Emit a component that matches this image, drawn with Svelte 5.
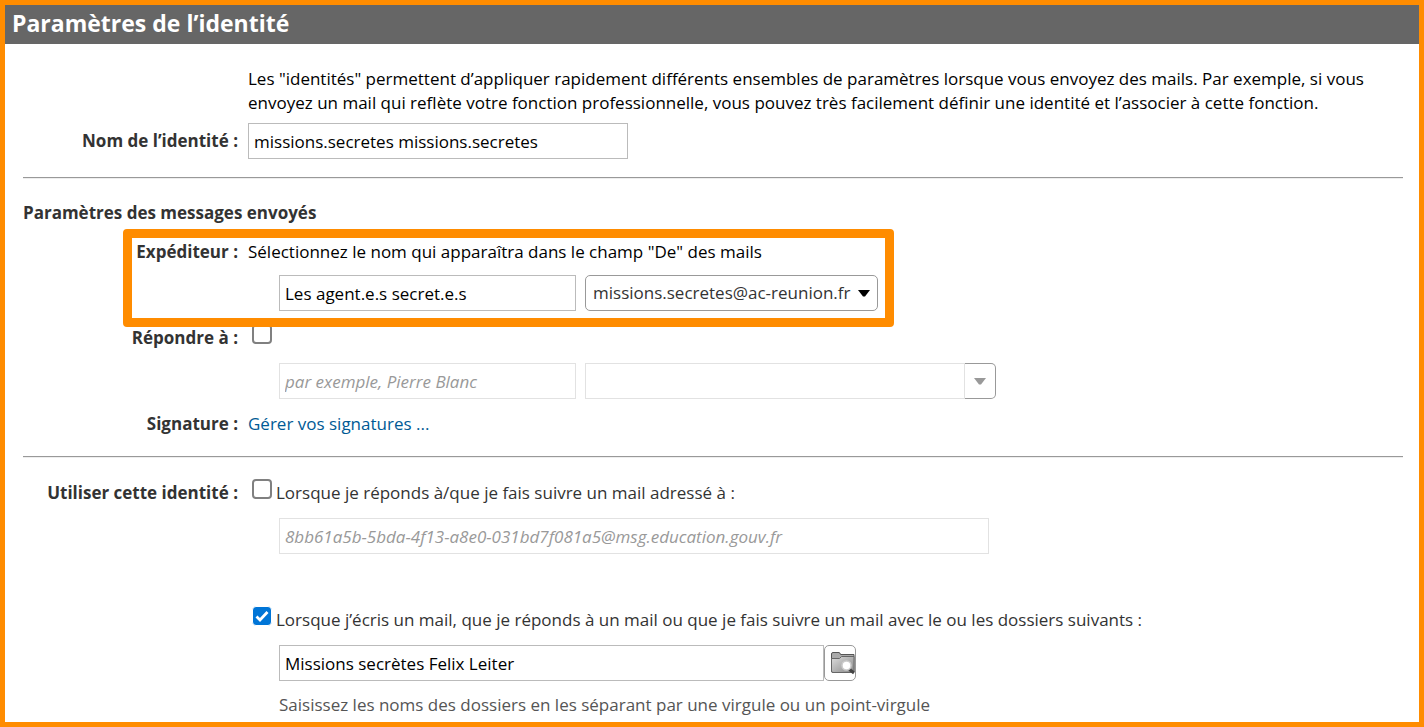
<script lang="ts">
	let identityName = $state('missions.secretes missions.secretes');
	let senderName = $state('Les agent.e.s secret.e.s');
	let senderAddress = $state('missions.secretes@ac-reunion.fr');
	let replyTo = $state(false);
	let replyName = $state('');
	let replyAddress = $state('');
	let useForAddress = $state(false);
	let addresses = $state('');
	let useForFolders = $state(true);
	let folders = $state('Missions secrètes Felix Leiter');

	const senderAddresses = ['missions.secretes@ac-reunion.fr'];
</script>

{#snippet checkbox(id: string, checked: boolean, toggle: () => void)}
	<span class="check">
		<input type="checkbox" {id} {checked} onchange={toggle} />
		<svg viewBox="0 0 20 20" aria-hidden="true">
			<path d="M4.5 10.5l3.5 3.500L15.500 6" fill="none" stroke="#fff" stroke-width="2.800" />
		</svg>
	</span>
{/snippet}

<main class="panel">
	<h1>Paramètres de l’identité</h1>

	<form class="body">
		<section class="identity">
			<div class="row">
				<span></span>
				<p>
					Les "identités" permettent d’appliquer rapidement différents ensembles de paramètres lorsque
					vous envoyez des mails. Par exemple, si vous envoyez un mail qui reflète votre fonction
					professionnelle, vous pouvez très facilement définir une identité et l’associer à cette
					fonction.
				</p>
			</div>
			<div class="row middle">
				<label class="name" for="identity-name">Nom de l’identité :</label>
				<input class="field medium" id="identity-name" type="text" bind:value={identityName} />
			</div>
		</section>

		<hr />

		<section class="sent">
			<h2>Paramètres des messages envoyés</h2>

			<div class="row sender">
				<label class="name" for="sender-name">Expéditeur :</label>
				<div>
					<p>Sélectionnez le nom qui apparaîtra dans le champ "De" des mails</p>
					<div class="controls">
						<input class="field short" id="sender-name" type="text" bind:value={senderName} />
						<span class="select">
							<select aria-label="Adresse" bind:value={senderAddress}>
								{#each senderAddresses as address (address)}
									<option value={address}>{address}</option>
								{/each}
							</select>
							<svg width="12" height="7" viewBox="0 0 12 7" aria-hidden="true">
								<path d="M0 0h12L7 6.5H5z" fill="#000" />
							</svg>
						</span>
					</div>
				</div>
				<span class="highlight"></span>
			</div>

			<div class="row reply">
				<label class="name" for="reply-to">Répondre à :</label>
				<div>
					<div class="option">
						{@render checkbox('reply-to', replyTo, () => (replyTo = !replyTo))}
					</div>
					<div class="controls">
						<input
							class="field short"
							type="text"
							aria-label="Nom de réponse"
							placeholder="par exemple, Pierre Blanc"
							disabled={!replyTo}
							bind:value={replyName}
						/>
						<span class="combo">
							<input
								class="field medium"
								type="text"
								aria-label="Adresse de réponse"
								disabled={!replyTo}
								bind:value={replyAddress}
							/>
							<button type="button" aria-label="Choisir une adresse" disabled={!replyTo}>
								<svg width="12" height="7" viewBox="0 0 12 7" aria-hidden="true">
									<path d="M0 0h12L7 6.5H5z" fill="#999" />
								</svg>
							</button>
						</span>
					</div>
				</div>
			</div>

			<div class="row signature">
				<span class="name">Signature :</span>
				<p><a href="#signatures">Gérer vos signatures ...</a></p>
			</div>
		</section>

		<hr />

		<section class="usage">
			<div class="row">
				<span class="name">Utiliser cette identité :</span>
				<div>
					<div class="option">
						{@render checkbox('use-address', useForAddress, () => (useForAddress = !useForAddress))}
						<label for="use-address">Lorsque je réponds à/que je fais suivre un mail adressé à :</label>
					</div>
					<div class="controls">
						<input
							class="field long"
							type="text"
							aria-label="Adresses"
							placeholder="8bb61a5b-5bda-4f13-a8e0-031bd7f081a5@msg.education.gouv.fr"
							disabled={!useForAddress}
							bind:value={addresses}
						/>
					</div>

					<div class="option folders">
						{@render checkbox('use-folders', useForFolders, () => (useForFolders = !useForFolders))}
						<label for="use-folders">
							Lorsque j’écris un mail, que je réponds à un mail ou que je fais suivre un mail avec le ou
							les dossiers suivants :
						</label>
					</div>
					<div class="controls joined">
						<input
							class="field folder"
							type="text"
							aria-label="Dossiers"
							disabled={!useForFolders}
							bind:value={folders}
						/>
						<button class="browse" type="button" aria-label="Parcourir les dossiers">
							<svg width="25" height="24" viewBox="0 0 25 24" aria-hidden="true">
								<defs>
									<linearGradient id="folder" x1="0" y1="0" x2="1" y2="1">
										<stop offset="0" stop-color="#ddd" />
										<stop offset="1" stop-color="#888" />
									</linearGradient>
								</defs>
								<path
									d="M1.500 20V3q0-1.500 1.500-1.500h6q1 0 1.500 2H24V20q0 1.500-1.500 1.500H3Q1.500 21.500 1.500 20z"
									fill="#aaa"
									stroke="#555"
								/>
								<path
									d="M1.500 7.500h8l2-2H24V20q0 1.500-1.500 1.500H3Q1.500 21.500 1.500 20z"
									fill="url(#folder)"
									stroke="#666"
								/>
								<path d="M19 18l5 4" stroke="#444" stroke-width="3" />
								<circle cx="16.500" cy="14.500" r="4.500" fill="#fff" stroke="#ccc" stroke-width="1.500" />
							</svg>
						</button>
					</div>
					<p class="hint">Saisissez les noms des dossiers en les séparant par une virgule ou un point-virgule</p>
				</div>
			</div>
		</section>
	</form>
</main>

<style>
	:global(body) {
		margin: 0;
		background: #fff;
	}

	.panel {
		box-sizing: border-box;
		min-height: 100vh;
		border: 5px solid #ff8c00;
		font-family: 'Segoe UI', 'Open Sans', 'Noto Sans', sans-serif;
		font-size: 17px;
		line-height: 24px;
		color: #333;
	}

	h1 {
		margin: 0;
		padding: 0 7px 2px;
		background: #666;
		color: #fff;
		font-size: 23px;
		line-height: 37px;
	}

	h2 {
		margin: 0;
		font-size: 17px;
		line-height: 24px;
	}

	p {
		margin: 0;
		color: #000;
	}

	a {
		color: #005a95;
		text-decoration: none;
	}

	hr {
		margin: 0;
		border: 0;
		border-top: 1px solid #999;
		border-bottom: 1px solid #eee;
	}

	.body {
		padding: 23px 16px 4px 18px;
	}

	.row {
		display: grid;
		grid-template-columns: 215px 1fr;
		column-gap: 10px;
	}

	.middle {
		align-items: center;
		margin-top: 8px;
	}

	.name {
		font-weight: bold;
		text-align: right;
	}

	.identity {
		padding-bottom: 18px;
	}

	.identity p {
		max-width: 1120px;
	}

	.sent {
		padding: 22px 0 20px;
	}

	.usage {
		padding-top: 23px;
	}

	.controls {
		display: flex;
		gap: 9px;
		margin: 13px 0 0 31px;
	}

	.joined {
		gap: 0;
	}

	.field {
		box-sizing: border-box;
		height: 36px;
		padding: 0 5px;
		border: 1px solid #bbb;
		border-radius: 0;
		background: #fff;
		color: #000;
		font: inherit;
	}

	.field:disabled {
		border-color: #e2e2e2;
	}

	.field::placeholder {
		color: #999;
		font-style: italic;
	}

	.short {
		width: 297px;
	}

	.medium {
		width: 380px;
	}

	.long {
		width: 710px;
	}

	.folder {
		width: 545px;
	}

	/* orange frame laid over the sender settings */
	.sender {
		position: relative;
		margin-top: 15px;
	}

	.sender .controls {
		margin-top: 11px;
	}

	.highlight {
		position: absolute;
		top: -11px;
		bottom: -16px;
		left: 100px;
		box-sizing: border-box;
		width: 771px;
		border: 9px solid #ff8c00;
		border-radius: 4px;
		pointer-events: none;
		z-index: 1;
	}

	.select {
		position: relative;
		display: flex;
	}

	.select select {
		box-sizing: border-box;
		width: 293px;
		height: 36px;
		padding: 0 24px 0 7px;
		border: 1px solid #999;
		border-radius: 5px;
		background: #fff;
		color: #333;
		font: inherit;
		appearance: none;
	}

	.select svg {
		position: absolute;
		top: 15px;
		right: 8px;
		pointer-events: none;
	}

	.combo {
		display: flex;
	}

	button {
		box-sizing: border-box;
		display: flex;
		align-items: center;
		justify-content: center;
		height: 36px;
		padding: 0;
		border: 1px solid #999;
		background: #fff;
	}

	.combo button {
		width: 31px;
		border-left: 0;
		border-radius: 0 5px 5px 0;
	}

	.browse {
		width: 32px;
		border-radius: 5px;
		justify-content: flex-end;
	}

	.reply {
		margin-top: 15px;
	}

	.signature {
		margin-top: 13px;
	}

	.option {
		display: flex;
		gap: 4px;
		min-height: 24px;
		padding-left: 4px;
	}

	.folders {
		margin-top: 54px;
	}

	.check {
		display: grid;
		width: 20px;
		height: 20px;
		margin-top: -2px;
	}

	.check input,
	.check svg {
		grid-area: 1 / 1;
		box-sizing: border-box;
		width: 20px;
		height: 20px;
		margin: 0;
	}

	.check input {
		appearance: none;
		border: 2px solid #808080;
		border-radius: 4px;
		background: #fff;
	}

	.check input:checked {
		border: 1px solid #fff;
		background: #0075d7;
	}

	.check svg {
		visibility: hidden;
		pointer-events: none;
	}

	.check input:checked + svg {
		visibility: visible;
	}

	.hint {
		margin: 12px 0 0 31px;
		color: #555;
	}
</style>
